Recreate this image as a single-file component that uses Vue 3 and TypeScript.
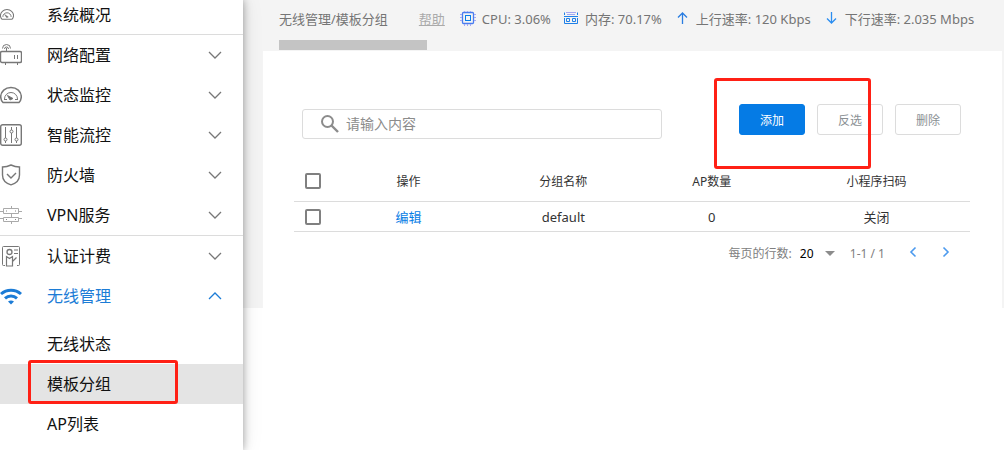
<script setup lang="ts">
import { ref } from 'vue'

interface MenuItem {
  label: string
  icon: string
  open?: boolean
  divided?: boolean
}

const menu: MenuItem[] = [
  { label: '网络配置', icon: 'router' },
  { label: '状态监控', icon: 'gauge' },
  { label: '智能流控', icon: 'sliders' },
  { label: '防火墙', icon: 'shield' },
  { label: 'VPN服务', icon: 'vpn', divided: true },
  { label: '认证计费', icon: 'badge' },
  { label: '无线管理', icon: 'wifi', open: true },
]

const submenu = [
  { label: '无线状态', active: false },
  { label: '模板分组', active: true },
  { label: 'AP列表', active: false },
]

const columns = ['操作', '分组名称', 'AP数量', '小程序扫码']
const rows = [{ name: 'default', count: 0, scan: '关闭' }]

const keyword = ref('')
const pageSize = ref(20)
</script>

<template>
  <div class="layout">
    <nav class="sidebar">
      <a href="#" class="item overview">
        <svg class="icon small" viewBox="0 0 22 22" fill="none" stroke="#777">
          <path d="M3 17.500C1.500 16 .7 14 .7 11.800.7 6.500 5.300 2.500 11 2.500s10.300 4 10.300 9.300c0 2.200-.8 4.200-2.300 5.700z" stroke-width="1.600" />
          <path d="M4.500 14a6.500 6.500 0 0 1 13 0" stroke-width="1.500" />
          <path d="M7.500 10.500l3 4.500 2.500-1z" fill="#666" />
        </svg>
        <span>系统概况</span>
      </a>
      <template v-for="m in menu" :key="m.label">
        <button type="button" class="item" :class="{ open: m.open, divided: m.divided }">
          <svg v-if="m.icon === 'router'" class="icon" viewBox="0 0 22 22" fill="none" stroke="#777">
            <rect x="0.5" y="7.5" width="21" height="11" rx="1.5" stroke-width="1.4" />
            <path d="M5.500 19v2M17.500 19v2M14.500 11v4M17.500 11v4M6.500 4v3M2.500 4.500a4 4 0 0 1 8 0M4.500 5a2 2 0 0 1 4 0" />
          </svg>
          <svg v-else-if="m.icon === 'gauge'" class="icon" viewBox="0 0 22 22" fill="none" stroke="#777">
            <path d="M3 18.500C1.500 17 .7 15 .7 12.800.7 7.500 5.300 3.500 11 3.500s10.300 4 10.300 9.300c0 2.200-.8 4.200-2.300 5.700z" stroke-width="1.500" />
            <path d="M4.500 15a6.500 6.500 0 0 1 13 0M4 15.500h3M15 15.500h3" />
            <path d="M7.500 11.500l2.500 4.500 3-1.500z" fill="#666" />
          </svg>
          <svg v-else-if="m.icon === 'sliders'" class="icon" viewBox="0 0 22 22" fill="none" stroke="#777">
            <rect x="0.700" y="0.700" width="20.600" height="20.600" rx="2" stroke-width="1.400" />
            <path d="M5.500 3v11M5.500 17v2M11.500 3v3M11.500 9v10M16.500 3v11M16.500 17v2" />
            <circle cx="5.500" cy="15.500" r="1.500" /><circle cx="11.500" cy="7.500" r="1.500" /><circle cx="16.500" cy="15.500" r="1.500" />
          </svg>
          <svg v-else-if="m.icon === 'shield'" class="icon" viewBox="0 0 22 22" fill="none" stroke="#777" stroke-width="1.400">
            <path d="M11 1c3 1.500 6 2 8.500 2v8c0 5-4 8.500-8.500 9.800C6.500 19.500 2.500 16 2.500 11V3C5 3 8 2.500 11 1z" />
            <path d="M7 10l4 4 5-5" />
          </svg>
          <svg v-else-if="m.icon === 'vpn'" class="icon" viewBox="0 0 22 22" fill="none" stroke="#aaa">
            <path d="M3.500 4.500h15v5h-15zM3.500 13.500h15v4h-15zM11.500 2v2.500M11.500 9.500v4M11.500 17.500V20M0 7.500h3.500M18.500 7.500H22M0 14.500h3.500M18.500 14.500H22" />
            <path d="M6 7h1M15 7h1M6 15.500h1M15 15.500h1" stroke="#888" />
          </svg>
          <svg v-else-if="m.icon === 'badge'" class="icon" viewBox="0 0 22 22" fill="none" stroke="#777">
            <path d="M5 20.500H3.500q-1 0-1-1v-17q0-1 1-1h15q1 0 1 1v17q0 1-1 1H17M14 5h4M14 8.500h4" />
            <circle cx="9.500" cy="7" r="2.500" stroke-width="1.300" />
            <path d="M6.500 21v-9.500l3 2 3-2V21zM12.500 16.500l4-4" stroke-width="1.200" />
          </svg>
          <svg v-else class="icon" viewBox="0 0 22 22" fill="none" stroke="#1c7cd6" stroke-width="3">
            <path d="M1 9a15 15 0 0 1 20 0M5 13.300a9 9 0 0 1 12 0" />
            <path d="M8 16.500a5 5 0 0 1 6 0l-3 3z" fill="#1c7cd6" stroke="none" />
          </svg>
          <span>{{ m.label }}</span>
          <svg class="caret" viewBox="0 0 14 8" fill="none" stroke="currentColor" stroke-width="1.300">
            <path :d="m.open ? 'M1 7l6-6 6 6' : 'M1 1l6 6 6-6'" />
          </svg>
        </button>
      </template>
      <div class="submenu">
        <a v-for="s in submenu" :key="s.label" href="#" class="sub" :class="{ active: s.active }">
          {{ s.label }}
          <i v-if="s.active" class="mark mark-menu"></i>
        </a>
      </div>
    </nav>

    <main class="main">
      <header class="header">
        <div class="title">
          <span class="crumb">无线管理/模板分组</span>
          <a href="#" class="help">帮助</a>
        </div>
        <div class="stat">
          <svg width="16" height="16" viewBox="0 0 16 16" fill="none" stroke="#4a7df0">
            <rect x="2.500" y="1.500" width="11" height="11" rx="1" stroke-width="1.300" />
            <rect x="5.500" y="4.500" width="5" height="5" stroke="#087de8" />
            <path d="M4.500 0v1M7.500 0v1M10.500 0v1M4.500 13v2M7.500 13v2M10.500 13v2M0 3.500h2M0 6.500h2M0 9.500h2M14 3.500h2M14 6.500h2M14 9.500h2" stroke="#a5a8f2" />
          </svg>
          <span>CPU: 3.06%</span>
        </div>
        <div class="stat">
          <svg width="16" height="16" viewBox="0 0 16 16" fill="none" stroke="#1f80e8">
            <path d="M1.500 4V1.500M14.500 1.500V4M1.500 7v5.500h13V7M1 5.500h14" />
            <path d="M3 1.500h10M4 3.500h8" stroke="#a5a8f2" />
            <path d="M3.500 7.500h3v3h-3zM9.500 7.500h3v3h-3z" />
          </svg>
          <span>内存: 70.17%</span>
        </div>
        <div class="stat arrow">
          <svg width="12" height="14" viewBox="0 0 12 14" fill="none" stroke="#2a7de1" stroke-width="1.300">
            <path d="M5.500 12V1M1 5.500L5.500 1 10 5.500" />
          </svg>
          <span>上行速率: 120 Kbps</span>
        </div>
        <div class="stat arrow">
          <svg width="12" height="14" viewBox="0 0 12 14" fill="none" stroke="#2a8df0" stroke-width="1.300">
            <path d="M5.500 0v11M1 6.500L5.500 11 10 6.500" />
          </svg>
          <span>下行速率: 2.035 Mbps</span>
        </div>
      </header>
      <div class="tab-bar"></div>

      <section class="card">
        <div class="toolbar">
          <label class="search">
            <svg width="20" height="20" viewBox="0 0 20 20" fill="none" stroke="#8c8c8c" stroke-width="2">
              <circle cx="7.500" cy="8.500" r="5.500" /><path d="M11.500 12.500l6.500 6.500" stroke-width="2.400" />
            </svg>
            <input v-model="keyword" type="text" placeholder="请输入内容" aria-label="请输入内容" />
          </label>
          <div class="actions">
            <button type="button" class="btn primary">添加</button>
            <button type="button" class="btn">反选</button>
            <button type="button" class="btn">删除</button>
            <i class="mark mark-add"></i>
          </div>
        </div>

        <table class="grid">
          <colgroup>
            <col class="c-check" /><col class="c-op" /><col class="c-name" /><col class="c-count" /><col class="c-scan" />
          </colgroup>
          <thead>
            <tr>
              <th><input type="checkbox" aria-label="全选" /></th>
              <th v-for="c in columns" :key="c">{{ c }}</th>
            </tr>
          </thead>
          <tbody>
            <tr v-for="r in rows" :key="r.name">
              <td><input type="checkbox" :aria-label="r.name" /></td>
              <td><a href="#">编辑</a></td>
              <td>{{ r.name }}</td>
              <td>{{ r.count }}</td>
              <td>{{ r.scan }}</td>
            </tr>
          </tbody>
        </table>

        <footer class="pager">
          <label for="size">每页的行数:</label>
          <div class="size">
            <select id="size" v-model="pageSize">
              <option :value="20">20</option>
              <option :value="50">50</option>
            </select>
            <svg width="10" height="5" viewBox="0 0 10 5"><path d="M0 0h10L5 5z" fill="#8c8c8c" /></svg>
          </div>
          <span class="range">1-1 / 1</span>
          <button type="button" class="page" aria-label="上一页">
            <svg width="8" height="12" viewBox="0 0 8 12" fill="none" stroke="#4c9aee" stroke-width="1.600"><path d="M6.500 1.500L2 6l4.500 4.500" /></svg>
          </button>
          <button type="button" class="page" aria-label="下一页">
            <svg width="8" height="12" viewBox="0 0 8 12" fill="none" stroke="#4c9aee" stroke-width="1.600"><path d="M1.500 1.500L6 6l-4.500 4.500" /></svg>
          </button>
        </footer>
      </section>
    </main>
  </div>
</template>

<style>
body {
  margin: 0;
  background: #fff;
}
</style>

<style scoped>
.layout {
  display: flex;
  align-items: flex-start;
  min-height: 100vh;
  font-family: "Noto Sans", "Noto Sans CJK SC", sans-serif;
  color: #333;
}
.layout * {
  box-sizing: border-box;
}
button, input, select {
  font-family: inherit;
}
svg {
  flex: none;
  display: block;
}
.sidebar {
  position: relative;
  z-index: 1;
  flex: 0 0 243px;
  min-height: 100vh;
  background: #fff;
  box-shadow: 0 0 8px rgba(0, 0, 0, 0.35), 0 0 20px rgba(0, 0, 0, 0.1);
}
.item {
  display: flex;
  align-items: center;
  width: 100%;
  height: 40px;
  padding: 0 21px 0 0;
  border: 0;
  background: none;
  font-size: 16px;
  line-height: 24px;
  color: #111;
  text-align: left;
  text-decoration: none;
}
.item span {
  flex: 1;
}
.overview {
  height: 35px;
  padding-bottom: 4px;
  border-bottom: 1px solid #dcdcdc;
}
.divided {
  height: 41px;
  border-bottom: 1px solid #dcdcdc;
}
.icon {
  width: 22px;
  height: 22px;
  margin-right: 25px;
}
.small {
  width: 14px;
  height: 14px;
  margin-right: 33px;
}
.caret {
  width: 14px;
  height: 8px;
  color: #777;
}
.open, .open .caret {
  color: #1c7cd6;
}
.submenu {
  padding: 8px 0 6px;
}
.sub {
  position: relative;
  display: block;
  padding-left: 47px;
  font-size: 16px;
  line-height: 40px;
  color: #111;
  text-decoration: none;
}
.active {
  background: #e4e4e4;
}
.mark {
  position: absolute;
  border: 3px solid #ff2015;
  border-radius: 3px;
  pointer-events: none;
}
.mark-menu {
  left: 28px;
  top: -4px;
  width: 150px;
  height: 44px;
}
.main {
  flex: 1;
  min-width: 0;
  padding: 0 2px 0 20px;
  background: #f4f4f4;
}
.header {
  display: flex;
  align-items: center;
  gap: 12px;
  height: 40px;
  padding: 0 0 2px 16px;
  font-size: 13px;
  line-height: 20px;
  color: #757575;
  white-space: nowrap;
}
.title {
  display: flex;
  gap: 31px;
  margin-right: 3px;
}
.help {
  color: #aaa;
}
.stat {
  display: flex;
  align-items: center;
  gap: 6px;
}
.arrow {
  gap: 7px;
  margin-left: 3px;
}
.tab-bar {
  width: 148px;
  height: 10px;
  margin: 0 0 1px 16px;
  background: #c4c4c4;
}
.card {
  padding: 53px 32px 44px 31px;
  background: #fff;
}
.toolbar {
  display: flex;
  justify-content: space-between;
  align-items: flex-start;
  padding: 0 9px 0 8px;
}
.search {
  display: flex;
  align-items: center;
  gap: 6px;
  width: 360px;
  height: 30px;
  margin-top: 5px;
  padding: 0 17px 2px;
  border: 1px solid #dcdcdc;
  border-radius: 3px;
}
.search input {
  flex: 1;
  min-width: 0;
  padding: 0;
  border: 0;
  outline: 0;
  background: none;
  font-size: 14px;
}
.search input::placeholder {
  color: #8c8c8c;
}
.actions {
  position: relative;
  display: flex;
  gap: 12px;
}
.btn {
  width: 66px;
  height: 31px;
  padding: 0;
  border: 1px solid #dcdcdc;
  border-radius: 3px;
  background: #fff;
  font-size: 12px;
  color: #8a9094;
}
.primary {
  border-color: #057be5;
  background: #057be5;
  color: #fff;
}
.mark-add {
  left: -25px;
  top: -26px;
  width: 157px;
  height: 91px;
}
.grid {
  width: 100%;
  margin-top: 21px;
  border-collapse: separate;
  border-spacing: 0;
  table-layout: fixed;
}
.c-check { width: 37px; }
.c-op { width: 24%; }
.c-name { width: 24%; }
.c-count { width: 22%; }
.c-scan { width: 29%; }
.grid th, .grid td {
  padding: 0;
  border-bottom: 1px solid #dcdcdc;
  text-align: center;
}
.grid th {
  height: 42px;
  font-size: 12px;
  font-weight: 400;
}
.grid td {
  height: 30px;
  font-size: 13px;
}
.grid a {
  color: #087de5;
  text-decoration: none;
}
.grid input {
  appearance: none;
  display: block;
  width: 16px;
  height: 16px;
  margin: 0 auto;
  border: 2px solid #808080;
  border-radius: 2px;
  background: #fff;
}
.pager {
  display: flex;
  justify-content: flex-end;
  align-items: center;
  height: 22px;
  margin-top: 10px;
  padding-right: 20px;
  font-size: 12px;
  color: #808080;
}
.size {
  display: flex;
  align-items: center;
  margin: 0 15px 0 8px;
}
.size select {
  appearance: none;
  width: 35px;
  margin-right: -10px;
  padding: 0;
  border: 0;
  background: none;
  font-size: 12px;
  color: #000;
}
.size svg {
  pointer-events: none;
}
.range {
  margin-right: 24px;
}
.page {
  padding: 0 0 2px;
  border: 0;
  background: none;
}
.page + .page {
  margin-left: 25px;
}
</style>
